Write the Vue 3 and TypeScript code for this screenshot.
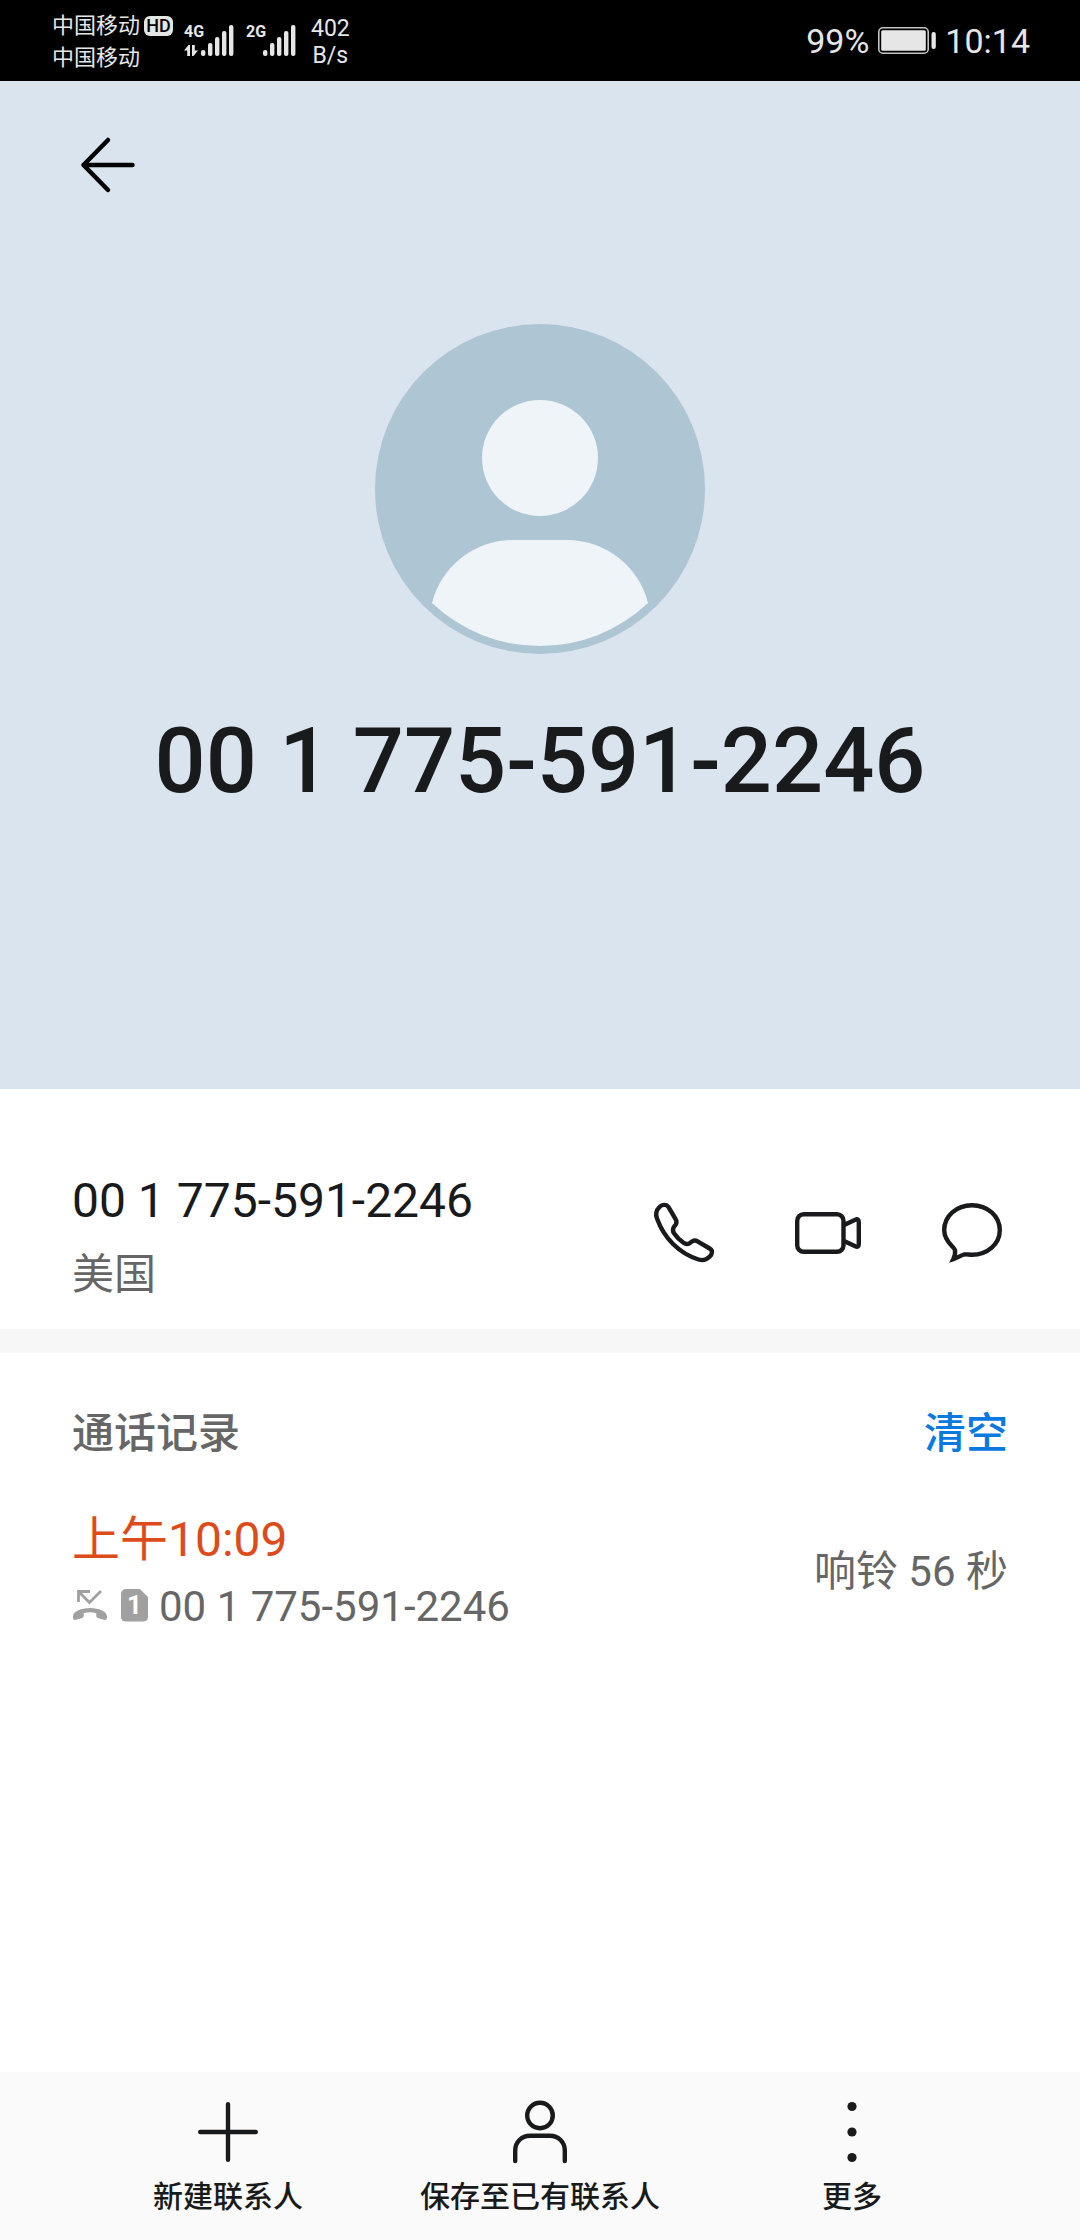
<script setup lang="ts">
interface Cell {
  label: string
  active: boolean
}

const phone = '00 1 775-591-2246'
const carriers: string[] = ['中国移动', '中国移动']
const cells: Cell[] = [
  { label: '4G', active: true },
  { label: '2G', active: false },
]
const bars: number[] = [6, 13, 19, 25, 31]
</script>

<template>
  <div class="page">
    <header class="status">
      <div class="status-left">
        <div class="carriers">
          <div v-for="(name, i) in carriers" :key="i" class="carrier">
            <span>{{ name }}</span>
            <span v-if="i === 0" class="hd">HD</span>
          </div>
        </div>
        <div v-for="cell in cells" :key="cell.label" class="cell">
          <div class="cell-type">
            <span class="cell-label">{{ cell.label }}</span>
            <svg v-if="cell.active" width="14" height="11" viewBox="0 0 14 11" fill="#e6e6e6" aria-hidden="true">
              <path d="M0 5.5 4.5 0H6v11H3.200V5.500ZM8 0h2.800v5.500H14L9.500 11H8Z" />
            </svg>
          </div>
          <svg width="33" height="31" viewBox="0 0 33 31" fill="#e6e6e6" aria-hidden="true">
            <rect v-for="(h, i) in bars" :key="h" :x="i * 7" :y="31 - h" width="4.400" :height="h" rx="2" />
          </svg>
        </div>
        <div class="speed"><span>402</span><span>B/s</span></div>
      </div>
      <div class="status-right">
        <span>99%</span>
        <svg width="58" height="27" viewBox="0 0 58 27" aria-hidden="true">
          <rect x="0.800" y="0.800" width="49.400" height="25.400" rx="4" fill="none" stroke="#c4c4c4" stroke-width="1.600" />
          <rect x="3.200" y="3.200" width="44.600" height="20.600" rx="1.500" fill="#e6e6e6" />
          <rect x="53.500" y="5" width="4.300" height="17" rx="2" fill="#e6e6e6" />
        </svg>
        <time>10:14</time>
      </div>
    </header>

    <section class="hero">
      <button class="icon-button back" type="button" aria-label="返回">
        <svg width="72" height="72" viewBox="0 0 72 72" fill="none" stroke="#000" stroke-width="4.500" stroke-linecap="round" stroke-linejoin="round" aria-hidden="true">
          <path d="M36 11 11.500 36 36 61M11.500 36H60.500" />
        </svg>
      </button>
      <svg class="avatar" width="330" height="330" viewBox="0 0 330 330" aria-hidden="true">
        <circle cx="165" cy="165" r="165" fill="#aec5d3" />
        <circle cx="165" cy="134" r="58" fill="#eef4f7" />
        <path d="M57 279A83.600 83.600 0 0 1 138 216H192A83.600 83.600 0 0 1 273 279A157 157 0 0 1 57 279Z" fill="#eef4f7" />
      </svg>
      <h1>{{ phone }}</h1>
    </section>

    <section class="contact">
      <div class="contact-text">
        <span class="contact-number">{{ phone }}</span>
        <span class="contact-place">美国</span>
      </div>
      <div class="actions">
        <button class="icon-button" type="button" aria-label="拨打电话">
          <svg class="line-icon" width="72" height="72" viewBox="0 0 72 72" aria-hidden="true">
            <path d="M20.700 10.300C18.500 7 14 7.300 11.500 10C8 13.500 7.300 17 9 21.500C16 41 31 56.500 50.500 62.500C55 64 58.500 62.800 61.500 59.800C64.500 57 65 53.500 61.700 51.500L49.500 44.300C47.500 43.200 46 43.300 44.300 44.300L41.500 46.300C39.500 47.500 37.500 47.300 35.500 45.800C31.500 43 28.500 40 26.200 36.500C24.700 34.300 24.500 32.300 25.700 30.300L27.700 27.500C28.800 25.800 28.800 24.300 27.700 22.300Z" />
          </svg>
        </button>
        <button class="icon-button" type="button" aria-label="视频通话">
          <svg class="line-icon" width="72" height="72" viewBox="0 0 72 72" aria-hidden="true">
            <rect x="5.200" y="17.200" width="46.300" height="37.600" rx="6.500" />
            <path d="M52 28 63.300 22.700Q66.800 21.300 66.800 25V47Q66.800 50.800 63.300 49.300L52 44" />
          </svg>
        </button>
        <button class="icon-button" type="button" aria-label="发送信息">
          <svg class="line-icon sharp" width="72" height="72" viewBox="0 0 72 72" aria-hidden="true">
            <path d="M36 8.200C51.500 8.200 63.800 19 63.800 33C63.800 47 51.500 57.800 36 57.800C33 57.800 30.500 57 28 57.500C24.500 58.500 21 61 17.300 62.200C18.800 59 19.500 56 19 53C18 49.500 8.200 45 8.200 33C8.200 19 20.500 8.200 36 8.200Z" />
          </svg>
        </button>
      </div>
    </section>

    <main class="log">
      <div class="log-head">
        <h2>通话记录</h2>
        <button class="clear" type="button">清空</button>
      </div>
      <div class="log-row">
        <div class="log-info">
          <time class="log-time">上午10:09</time>
          <div class="log-detail">
            <span class="log-marks">
              <svg width="36" height="36" viewBox="0 0 36 36" aria-hidden="true">
                <path d="M6.500 15V4.500H18M7 5 17.500 15.500 29 4" fill="none" stroke="#a0a0a0" stroke-width="2.800" />
                <path d="M1 29.500C1 24.500 9 21 18 21S35 24.500 35 29.500C35 32.500 34.300 33.300 32 32.800L26.500 31.300C24.800 30.800 24.300 30 24.300 28.500V26.300C20.500 25 15.500 25 11.700 26.300V28.500C11.700 30 11.200 30.800 9.500 31.300L4 32.800C1.700 33.300 1 32.500 1 29.500Z" fill="#a0a0a0" />
              </svg>
              <span class="sim">1</span>
            </span>
            <span>{{ phone }}</span>
          </div>
        </div>
        <span class="duration">响铃 56 秒</span>
      </div>
    </main>

    <nav class="toolbar">
      <button type="button">
        <svg class="line-icon" width="72" height="72" viewBox="0 0 72 72" aria-hidden="true">
          <path d="M36 8.200V63.800M8.200 36H63.800" />
        </svg>
        <span>新建联系人</span>
      </button>
      <button type="button">
        <svg class="line-icon" width="72" height="72" viewBox="0 0 72 72" aria-hidden="true">
          <circle cx="36" cy="19.500" r="12.800" />
          <path d="M11.200 65V54.500C11.200 46 17.500 39.800 26 39.800H46C54.500 39.800 60.800 46 60.800 54.500V65" />
        </svg>
        <span>保存至已有联系人</span>
      </button>
      <button type="button">
        <svg width="72" height="72" viewBox="0 0 72 72" fill="#191a1b" aria-hidden="true">
          <circle cx="36" cy="10.500" r="4.600" />
          <circle cx="36" cy="36" r="4.600" />
          <circle cx="36" cy="61.500" r="4.600" />
        </svg>
        <span>更多</span>
      </button>
    </nav>
  </div>
</template>

<style>
body {
  margin: 0;
  background: #fff;
}
</style>

<style scoped>
.page {
  display: flex;
  flex-direction: column;
  min-height: 100vh;
  background: #fff;
  color: #191a1b;
  font-family: Roboto, "Noto Sans CJK SC", sans-serif;
}

button {
  margin: 0;
  padding: 0;
  border: 0;
  background: none;
  color: inherit;
  font: inherit;
  cursor: pointer;
}

svg {
  display: block;
  flex: none;
}

.status {
  display: flex;
  align-items: center;
  justify-content: space-between;
  height: 81px;
  padding: 0 50px 0 52px;
  background: #000;
  color: #e6e6e6;
}

.status-left {
  display: flex;
  align-items: center;
}

.carriers {
  width: 132px;
  padding-top: 2px;
  font-size: 22px;
  line-height: 32px;
}

.carrier {
  display: flex;
  align-items: center;
  gap: 4px;
}

.hd {
  width: 29px;
  border-radius: 6px;
  background: #e6e6e6;
  color: #000;
  font-size: 18px;
  font-weight: 500;
  line-height: 20px;
  text-align: center;
}

.cell {
  display: flex;
  margin-right: 12px;
}

.cell-type {
  display: flex;
  flex-direction: column;
  justify-content: space-between;
  width: 17px;
}

.cell-label {
  font-size: 16px;
  font-weight: 700;
  line-height: 14px;
}

.speed {
  display: flex;
  flex-direction: column;
  align-items: center;
  margin-left: 3px;
  padding-top: 2px;
  font-size: 23px;
  line-height: 27px;
}

.status-right {
  display: flex;
  align-items: center;
  gap: 9px;
  font-size: 34px;
  line-height: 40px;
}

.hero {
  display: flex;
  flex-direction: column;
  align-items: center;
  height: 1008px;
  background: #dae4ee;
}

.back {
  align-self: flex-start;
  margin: 48px 0 0 72px;
}

.avatar {
  margin-top: 123px;
}

h1 {
  margin: 48px 0 0;
  font-size: 90px;
  font-weight: 500;
  line-height: 120px;
}

.contact {
  display: flex;
  align-items: center;
  justify-content: space-between;
  height: 168px;
  padding: 60px 72px 12px;
  border-bottom: 24px solid #f7f7f7;
}

.contact-text {
  display: flex;
  flex-direction: column;
  padding-top: 8px;
}

.contact-number {
  font-size: 48px;
  line-height: 76px;
}

.contact-place {
  color: #666;
  font-size: 42px;
  line-height: 72px;
}

.actions {
  display: flex;
  gap: 72px;
}

.line-icon {
  fill: none;
  stroke: #191a1b;
  stroke-width: 4.4px;
  stroke-linecap: round;
  stroke-linejoin: round;
}

.sharp {
  stroke-linejoin: miter;
}

.log {
  flex: 1;
  padding: 49px 72px 0;
  color: #666;
  font-size: 42px;
}

.log-head,
.log-row {
  display: flex;
  justify-content: space-between;
}

.log-head {
  align-items: center;
  line-height: 64px;
}

h2 {
  margin: 0;
  font-size: 42px;
  font-weight: 500;
}

.clear {
  color: #0a7ae0;
  font-weight: 500;
}

.log-row {
  margin-top: 40px;
}

.log-info {
  display: flex;
  flex-direction: column;
}

.log-time {
  color: #dd4b1a;
  font-size: 48px;
  line-height: 68px;
}

.log-detail {
  display: flex;
  align-items: center;
  line-height: 66px;
}

.log-marks {
  display: flex;
  align-items: center;
  padding-bottom: 4px;
}

.sim {
  width: 27px;
  margin: 0 11px 0 13px;
  border-radius: 5px;
  background: #a0a0a0;
  clip-path: polygon(0 0, 68% 0, 100% 26%, 100% 100%, 0 100%);
  color: #fff;
  font-size: 26px;
  font-weight: 700;
  line-height: 33px;
  text-align: center;
}

.duration {
  line-height: 132px;
}

.toolbar {
  display: flex;
  height: 168px;
  padding: 0 72px;
  background: #fafafa;
}

.toolbar button {
  display: flex;
  flex: 1;
  flex-direction: column;
  align-items: center;
  padding-top: 24px;
  font-size: 30px;
  font-weight: 500;
  line-height: 58px;
  white-space: nowrap;
}
</style>
